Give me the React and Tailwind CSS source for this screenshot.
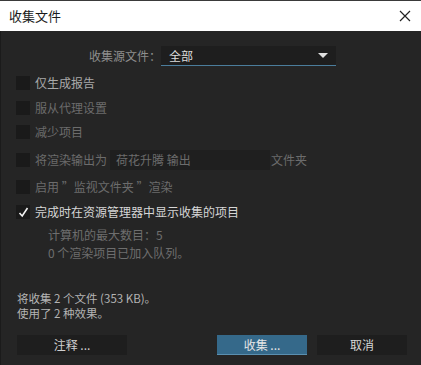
import React, { useState } from "react";

const font = { fontFamily: '"Noto Sans CJK SC", "Noto Sans", sans-serif' };

// simple checkbox row used by the option list
const Option = ({ checked, label, bright, dim, className = "", children }) => (
  <div className={`flex items-center h-[20px] ${className}`}>
    <div className="w-[14px] h-[14px] bg-[#1a1a1a] flex items-center justify-center shrink-0">
      {checked && (
        <svg width="11" height="11" viewBox="0 0 11 11">
          <path d="M1.5 6 L4.2 9 L9.5 1" stroke="#f2f2f2" strokeWidth="1.6" fill="none" />
        </svg>
      )}
    </div>
    <span
      className={`ml-[5px] text-[12px] leading-none whitespace-nowrap ${
        bright ? "text-[#d6d6d6]" : dim ? "text-[#6c6c6c]" : "text-[#a9a9a9]"
      }`}
    >
      {label}
    </span>
    {children}
  </div>
);

const App = () => {
  const [showResult, setShowResult] = useState(true);

  return (
    <div className="w-[421px] h-[365px] flex flex-col bg-[#252525] overflow-hidden" style={font}>
      {/* Title bar */}
      <div className="h-[31px] bg-white flex items-center justify-between border-t border-[#3a3a3a] shrink-0">
        <span className="pl-[9px] text-[13px] text-[#1a1a1a]">收集文件</span>
        <svg className="mr-[10px]" width="12" height="12" viewBox="0 0 12 12">
          <path d="M1 1 L11 11 M11 1 L1 11" stroke="#222" strokeWidth="1.2" />
        </svg>
      </div>

      {/* Body */}
      <div className="flex-1 flex flex-col border-l border-[#1b1b1b] pl-[15px] pr-[14px]">
        {/* Source dropdown */}
        <div className="flex items-center mt-[15px] pl-[73px]">
          <span className="text-[12px] text-[#8e8e8e] w-[72px] whitespace-nowrap">收集源文件：</span>
          <div className="w-[175px] h-[20px] bg-[#1e1e1e] border-b border-[#4b7d9c] flex items-center justify-between px-[8px]">
            <span className="text-[12px] text-[#dcdcdc]">全部</span>
            <svg width="10" height="6" viewBox="0 0 10 6">
              <path d="M0 0 H10 L5 5 Z" fill="#e0e0e0" />
            </svg>
          </div>
        </div>

        {/* Options */}
        <div className="flex flex-col mt-[7px]">
          <Option label="仅生成报告" />
          <Option label="服从代理设置" dim className="mt-[5px]" />
          <Option label="减少项目" dim className="mt-[4px]" />
          <Option label="将渲染输出为" dim className="mt-[8px]">
            <div className="ml-[3px] w-[160px] h-[20px] bg-[#1f1f1f] flex items-center px-[6px]">
              <span className="text-[12px] text-[#6c6c6c] whitespace-nowrap">荷花升腾 输出</span>
            </div>
            <span className="ml-[1px] text-[12px] text-[#6c6c6c]">文件夹</span>
          </Option>
          <Option label={"启用 \u201d监视文件夹 \u201d渲染"} dim className="mt-[7px]" />
          <div onClick={() => setShowResult(!showResult)}>
            <Option checked={showResult} label="完成时在资源管理器中显示收集的项目" bright className="mt-[5px]" />
          </div>
        </div>

        {/* Info */}
        <div className="flex flex-col pl-[32px] mt-[4px] text-[12px] leading-[18px] text-[#6e6e6e]">
          <span>计算机的最大数目：5</span>
          <span>0 个渲染项目已加入队列。</span>
        </div>

        {/* Summary */}
        <div className="flex flex-col mt-[29px] pl-[1px] text-[11.5px] leading-[15px] text-[#b4b4b4]">
          <span>将收集 2 个文件 (353 KB)。</span>
          <span>使用了 2 种效果。</span>
        </div>

        {/* Buttons */}
        <div className="flex items-center mt-[14px] pl-[1px]">
          <button className="w-[110px] h-[20px] bg-[#1e1e1e] text-[12px] text-[#cfcfcf] leading-none">注释 ...</button>
          <button className="ml-auto w-[90px] h-[20px] bg-[#35698a] border-b border-[#5a8fb0] text-[12px] text-[#e6e6e6] leading-none">
            收集 ...
          </button>
          <button className="ml-[10px] w-[90px] h-[20px] bg-[#1e1e1e] text-[12px] text-[#d6d6d6] leading-none">取消</button>
        </div>
      </div>
    </div>
  );
};

export default App;
